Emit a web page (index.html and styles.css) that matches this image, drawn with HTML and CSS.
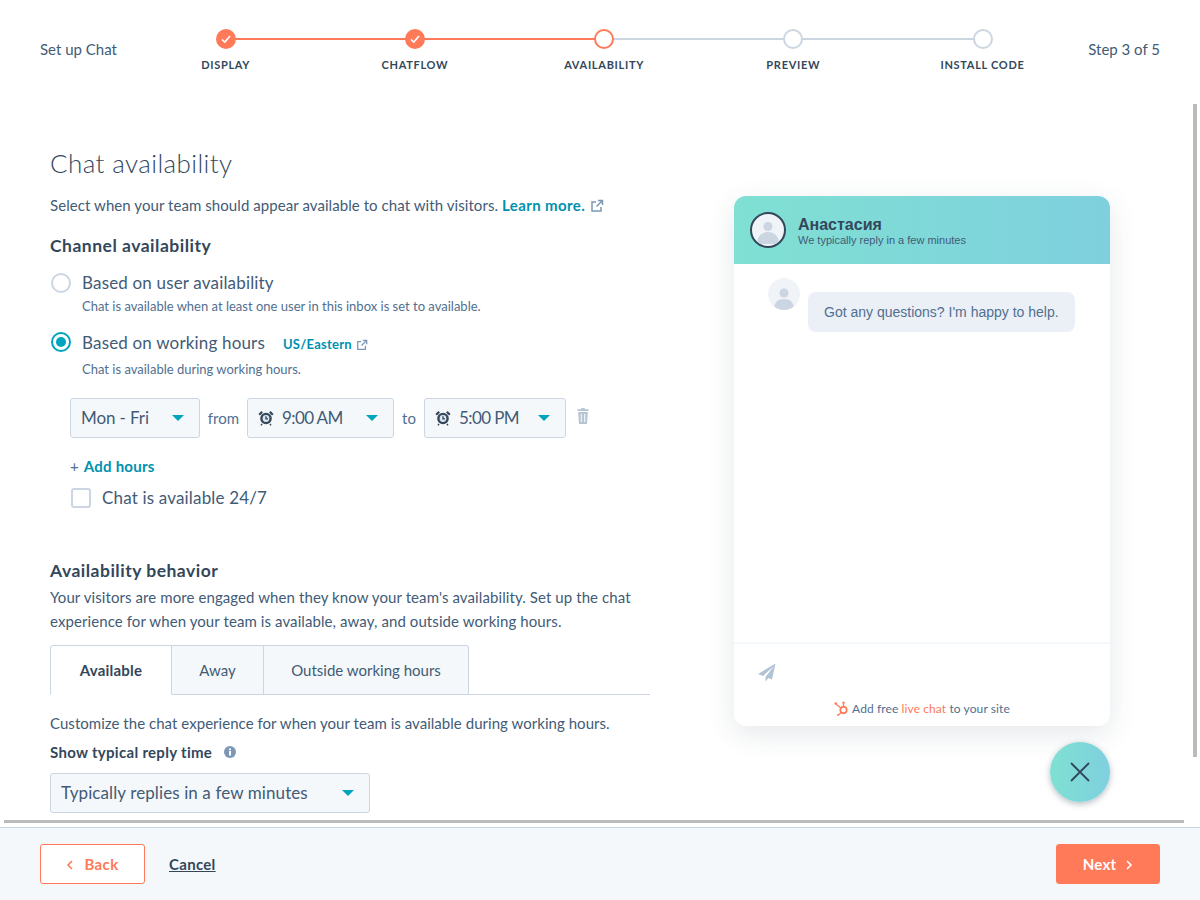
FILE: index.html
```html
<!DOCTYPE html>
<html lang="en">
<head>
<meta charset="utf-8">
<title>Set up Chat</title>
<link rel="stylesheet" href="styles.css">
</head>
<body>
<header class="top">
  <span class="top-text">Set up Chat</span>
  <ol class="stepper">
    <li class="step done"><span class="dot"><svg width="12" height="12" viewBox="0 0 12 12"><path d="M2 6.500l2.800 2.600L10 3" fill="none" stroke="#fff" stroke-width="1.600"/></svg></span><span class="step-label">DISPLAY</span></li>
    <li class="step done"><span class="dot"><svg width="12" height="12" viewBox="0 0 12 12"><path d="M2 6.500l2.800 2.600L10 3" fill="none" stroke="#fff" stroke-width="1.600"/></svg></span><span class="step-label">CHATFLOW</span></li>
    <li class="step current"><span class="dot"></span><span class="step-label">AVAILABILITY</span></li>
    <li class="step"><span class="dot"></span><span class="step-label">PREVIEW</span></li>
    <li class="step"><span class="dot"></span><span class="step-label">INSTALL CODE</span></li>
  </ol>
  <span class="top-text">Step 3 of 5</span>
</header>

<main class="content">
  <section class="form">
    <h1 class="title">Chat availability</h1>
    <p class="desc">Select when your team should appear available to chat with visitors. <a class="link">Learn more. <svg class="ext" width="14" height="14" viewBox="0 0 14 14"><path d="M11 8v4H2V3h4M8 1.500h4.500V6M12.500 1.500L6.500 7.500" fill="none" stroke="#7c98b6" stroke-width="1.500"/></svg></a></p>
    <h2 class="heading h-channel">Channel availability</h2>

    <div class="radio-row r1"><span class="radio"></span><span class="opt">Based on user availability</span></div>
    <p class="help h1">Chat is available when at least one user in this inbox is set to available.</p>
    <div class="radio-row r2"><span class="radio on"></span><span class="opt">Based on working hours</span><a class="link tz">US/Eastern <svg class="ext" width="12" height="12" viewBox="0 0 14 14"><path d="M11 8v4H2V3h4M8 1.500h4.500V6M12.500 1.500L6.500 7.500" fill="none" stroke="#7c98b6" stroke-width="1.500"/></svg></a></div>
    <p class="help h2">Chat is available during working hours.</p>

    <div class="hours">
      <div class="select s-day"><span>Mon - Fri</span><i class="caret"></i></div>
      <span class="word w-from">from</span>
      <div class="select s-time"><svg class="clock" width="16" height="16" viewBox="0 0 16 16"><circle cx="8" cy="8.500" r="5.800" fill="#33475b"/><circle cx="8" cy="8.500" r="3.400" fill="#dfe6ee"/><path d="M8 6.200v2.600h2" fill="none" stroke="#33475b" stroke-width="1.300"/><path d="M1.200 4.800L4.200 1.800 M14.800 4.800L11.800 1.800" stroke="#33475b" stroke-width="2.200"/><path d="M4 13.800l-1 1.500M12 13.800l1 1.500" stroke="#33475b" stroke-width="1.400"/></svg><span>9:00 AM</span><i class="caret"></i></div>
      <span class="word w-to">to</span>
      <div class="select s-time s-time2"><svg class="clock" width="16" height="16" viewBox="0 0 16 16"><circle cx="8" cy="8.500" r="5.800" fill="#33475b"/><circle cx="8" cy="8.500" r="3.400" fill="#dfe6ee"/><path d="M8 6.200v2.600h2" fill="none" stroke="#33475b" stroke-width="1.300"/><path d="M1.200 4.800L4.200 1.800 M14.800 4.800L11.800 1.800" stroke="#33475b" stroke-width="2.200"/><path d="M4 13.800l-1 1.500M12 13.800l1 1.500" stroke="#33475b" stroke-width="1.400"/></svg><span>5:00 PM</span><i class="caret"></i></div>
      <svg class="trash" width="12" height="16" viewBox="0 0 12 16"><path d="M4.500 0h3l.5 1.200h3.500v1.800H.5V1.200H4zM1.200 4h9.600l-.7 11a1 1 0 0 1-1 1H2.900a1 1 0 0 1-1-1z" fill="#b6c4d3"/><path d="M4.300 6v8M7.700 6v8" stroke="#fff" stroke-width="1"/></svg>
    </div>

    <div class="add"><span class="plus">+</span><a class="link">Add hours</a></div>
    <div class="check-row"><span class="check"></span><span class="opt">Chat is available 24/7</span></div>

    <h2 class="heading h-behavior">Availability behavior</h2>
    <p class="para">Your visitors are more engaged when they know your team's availability. Set up the chat experience for when your team is available, away, and outside working hours.</p>

    <div class="tabs">
      <span class="tab active">Available</span>
      <span class="tab t-away">Away</span>
      <span class="tab t-out">Outside working hours</span>
    </div>

    <p class="para custom">Customize the chat experience for when your team is available during working hours.</p>
    <div class="label-row"><span class="label">Show typical reply time</span><svg width="12" height="12" viewBox="0 0 12 12"><circle cx="6" cy="6" r="6" fill="#7c98b6"/><rect x="5" y="5" width="2" height="4.500" fill="#fff"/><circle cx="6" cy="3.300" r="1.100" fill="#fff"/></svg></div>
    <div class="select s-reply"><span>Typically replies in a few minutes</span><i class="caret"></i></div>
  </section>

  <aside class="side">
    <div class="widget">
      <div class="w-head">
        <span class="avatar big"><svg viewBox="0 0 32 32" width="32" height="32"><circle cx="16" cy="12.500" r="4.500" fill="#cbd6e2"/><path d="M5 30c0-8 5-12 11-12s11 4 11 12z" fill="#cbd6e2"/></svg></span>
        <div class="w-id"><strong class="w-name">Анастасия</strong><span class="w-sub">We typically reply in a few minutes</span></div>
      </div>
      <div class="w-body">
        <span class="avatar small"><svg viewBox="0 0 32 32" width="32" height="32"><circle cx="16" cy="15" r="4.500" fill="#cbd6e2"/><path d="M6 32c0-8 4-11 10-11s10 3 10 11z" fill="#cbd6e2"/></svg></span>
        <div class="bubble">Got any questions? I'm happy to help.</div>
      </div>
      <div class="w-input"><svg width="18" height="19" viewBox="0 0 18 19"><path d="M17.500.5L0 11l5 2L16 3 7.500 14v4.500l3-3.500 3.500 1.500z" fill="#b3c3d6"/></svg></div>
      <div class="w-brand"><svg width="15" height="15" viewBox="0 0 15 15"><circle cx="9.500" cy="9" r="3.200" fill="none" stroke="#ff7a59" stroke-width="1.700"/><path d="M9.500 6V2.500M7 7L1.800 3M7.300 11.300L4.500 14" stroke="#ff7a59" stroke-width="1.300"/><circle cx="1.800" cy="2.500" r="1.300" fill="#ff7a59"/><circle cx="9.500" cy="1.800" r="1.200" fill="#ff7a59"/><circle cx="4" cy="14" r="1" fill="#ff7a59"/></svg><span>Add free <em class="live">live chat</em> to your site</span></div>
    </div>
    <div class="fab"><svg width="20" height="20" viewBox="0 0 20 20"><path d="M1 1l18 18M19 1L1 19" stroke="#33475b" stroke-width="1.800"/></svg></div>
  </aside>
</main>

<div class="hbar"></div>
<div class="vbar"></div>

<footer class="bottom">
  <button class="btn back"><svg width="8" height="12" viewBox="0 0 8 12"><path d="M6 2L2 6l4 4" fill="none" stroke="#ff7a59" stroke-width="1.600"/></svg>Back</button>
  <a class="cancel">Cancel</a>
  <button class="btn next">Next<svg width="8" height="12" viewBox="0 0 8 12"><path d="M2 2l4 4-4 4" fill="none" stroke="#fff" stroke-width="1.600"/></svg></button>
</footer>
</body>
</html>
```

FILE: styles.css
```css
* { box-sizing: border-box; }
html, body { margin: 0; height: 100%; }
body {
  height: 900px;
  overflow: hidden;
  display: flex;
  flex-direction: column;
  position: relative;
  font-family: "Lato", "Open Sans", sans-serif;
  font-size: 15px;
  color: #33475b;
  background: #fff;
}
p, h1, h2, ol { margin: 0; padding: 0; }

/* top */
.top {
  height: 100px;
  flex: none;
  padding: 0 40px;
  display: flex;
  justify-content: space-between;
  align-items: flex-start;
}
.top-text { font-size: 15px; line-height: 20px; margin-top: 39px; color: #425b76; }
.stepper { display: flex; width: 946px; list-style: none; padding-top: 29px; margin-left: 3px; }
.step {
  flex: 1;
  position: relative;
  display: flex;
  flex-direction: column;
  align-items: center;
}
.step::before {
  content: "";
  position: absolute;
  left: 50%;
  width: 100%;
  top: 9px;
  height: 2px;
  background: #cbd6e2;
}
.step:last-child::before { display: none; }
.step.done::before { background: #ff7a59; }
.dot {
  position: relative;
  width: 20px;
  height: 20px;
  border-radius: 50%;
  border: 2px solid #cbd6e2;
  background: #fff;
  display: flex;
  align-items: center;
  justify-content: center;
}
.done .dot { background: #ff7a59; border-color: #ff7a59; }
.current .dot { border-color: #ff7a59; }
.step-label {
  margin-top: 9px;
  font-size: 11px;
  line-height: 14px;
  font-weight: 700;
  letter-spacing: .7px;
}

/* layout */
.content { flex: 1; min-height: 0; display: flex; padding: 47px 0 0 50px; overflow: hidden; }
.form { width: 600px; flex: none; }
.side { width: 376px; margin-left: 84px; padding-top: 49px; display: flex; flex-direction: column; flex: none; }

.title { font-size: 26px; line-height: 32px; font-weight: 300; letter-spacing: .4px; }
.desc { margin-top: 14px; font-size: 15px; line-height: 24px; letter-spacing: .07px; color: #425b76; }
.link { color: #0091ae; font-weight: 700; letter-spacing: .4px; }
.ext { vertical-align: -2px; margin-left: 1px; }
.heading { font-size: 17.500px; line-height: 24px; font-weight: 700; letter-spacing: .5px; }
.h-channel { margin-top: 17px; }
.radio-row { display: flex; align-items: center; height: 24px; }
.r1 { margin-top: 13px; }
.r2 { margin-top: 14px; }
.r2 .opt { margin-top: 2px; }
.radio {
  width: 20px; height: 20px; flex: none;
  border-radius: 50%;
  border: 2px solid #cbd6e2;
  background: #fff;
  margin: 0 11px 0 1px;
  position: relative;
}
.radio.on { border-color: #00a4bd; }
.radio.on::after {
  content: "";
  position: absolute;
  inset: 3px;
  border-radius: 50%;
  background: #00a4bd;
}
.opt { font-size: 17px; line-height: 22px; letter-spacing: .17px; color: #425b76; }
.tz { font-size: 13px; line-height: 18px; margin: 4px 0 0 18px; letter-spacing: .25px; }
.help { font-size: 13px; line-height: 20px; padding-left: 32px; color: #516f90; }
.h1 { margin-top: 1px; }
.h2 { margin-top: 5px; }

.hours { display: flex; align-items: center; margin-top: 19px; margin-left: 20px; height: 40px; }
.select {
  height: 40px;
  display: flex;
  align-items: center;
  background: #f5f8fa;
  border: 1px solid #cbd6e2;
  border-radius: 3px;
  padding: 0 10px 1px;
  font-size: 17px;
  color: #425b76;
  position: relative;
  flex: none;
}
.caret {
  position: absolute;
  right: 15px;
  top: 16px;
  border: 6px solid transparent;
  border-bottom: 0;
  border-top: 6px solid #00a4bd;
  border-left-width: 6.500px;
  border-right-width: 6.500px;
}
.s-day { width: 130px; letter-spacing: -.1px; }
.s-time { width: 147px; letter-spacing: -.6px; }
.s-time2 { width: 142px; }
.s-reply { width: 320px; margin-top: 9px; letter-spacing: .1px; }
.clock { margin-right: 8px; margin-top: 1px; flex: none; }
.word { font-size: 15px; line-height: 20px; margin-top: -1px; color: #516f90; text-align: center; }
.w-from { width: 47px; }
.w-to { width: 30px; }
.trash { margin-left: 11px; margin-top: -4px; }

.add { margin-top: 18px; margin-left: 20px; font-size: 15px; line-height: 20px; }
.add .link { letter-spacing: .25px; }
.plus { color: #516f90; margin-right: 5px; }
.check-row { display: flex; align-items: center; height: 24px; margin-top: 10px; margin-left: 21px; }
.check {
  width: 20px; height: 20px;
  border: 2px solid #cbd6e2;
  border-radius: 3px;
  background: #fff;
  margin-right: 11px;
}
.h-behavior { margin-top: 49px; }
.para { font-size: 15px; line-height: 24px; letter-spacing: .09px; margin-top: 2px; color: #425b76; }

.tabs {
  margin-top: 12px;
  height: 50px;
  display: flex;
  border-bottom: 1px solid #cbd6e2;
}
.tab {
  height: 50px;
  display: flex;
  align-items: center;
  justify-content: center;
  font-size: 15px;
  color: #425b76;
  background: #f5f8fa;
  border: 1px solid #cbd6e2;
  border-left: 0;
  margin-bottom: -1px;
}
.tab.active {
  width: 122px;
  background: #fff;
  font-weight: 700;
  color: #33475b;
  letter-spacing: .2px;
  border-left: 1px solid #cbd6e2;
  border-bottom-color: #fff;
  border-radius: 3px 0 0 0;
}
.t-away { width: 92px; }
.t-out { width: 205px; border-radius: 0 3px 0 0; }

.para.custom { margin-top: 16px; letter-spacing: .04px; }
.label-row { display: flex; align-items: center; gap: 12px; margin-top: 5px; height: 24px; }
.label { font-size: 15px; font-weight: 700; letter-spacing: .3px; }

/* widget */
.widget {
  height: 530px;
  border-radius: 12px;
  background: #fff;
  box-shadow: 0 8px 28px rgba(45, 62, 80, .12);
  display: flex;
  flex-direction: column;
  font-family: "Liberation Sans", Arial, sans-serif;
  overflow: hidden;
}
.w-head {
  height: 68px;
  flex: none;
  background: linear-gradient(90deg, #80e0d3, #7ed0de);
  display: flex;
  align-items: center;
  padding-left: 16px;
}
.avatar {
  display: block;
  border-radius: 50%;
  background: #f0f3f8;
  overflow: hidden;
  flex: none;
}
.avatar.big { width: 36px; height: 36px; border: 2px solid #33475b; }
.avatar.small { width: 32px; height: 32px; }
.w-id { margin-left: 12px; padding-top: 2px; display: flex; flex-direction: column; }
.w-name { font-size: 16px; line-height: 18px; }
.w-sub { font-size: 11px; line-height: 14px; margin-top: -1px; color: #425b76; }
.w-body { flex: 1; display: flex; padding: 14px 0 0 34px; align-items: flex-start; border-bottom: 2px solid #f5f8fa; }
.bubble {
  margin: 14px 0 0 8px;
  height: 40px;
  width: 267px;
  padding: 0 16px;
  display: flex;
  align-items: center;
  white-space: nowrap;
  background: #eaf0f6;
  border-radius: 8px;
  font-size: 14px;
  color: #516f90;
}
.w-input { height: 50px; flex: none; padding: 19px 0 0 24px; }
.w-brand {
  height: 32px;
  flex: none;
  display: flex;
  justify-content: center;
  align-items: center;
  gap: 3px;
  font-family: "Lato", sans-serif;
  font-size: 12px;
  letter-spacing: .1px;
  color: #516f90;
  padding-bottom: 3px;
}
.live { font-style: normal; color: #ff7a59; }
.fab {
  margin-top: 16px;
  align-self: flex-end;
  width: 60px; height: 60px;
  border-radius: 50%;
  background: linear-gradient(90deg, #80e0d3, #7ed0de);
  box-shadow: 0 2px 6px rgba(45, 62, 80, .35);
  display: flex;
  align-items: center;
  justify-content: center;
}

/* scrollbars */
.hbar { position: absolute; left: 4px; top: 820px; width: 1180px; height: 3px; background: #bbb; }
.vbar { position: absolute; left: 1193px; top: 104px; width: 4px; height: 653px; background: #bbb; }

/* footer */
.bottom {
  height: 73px;
  flex: none;
  background: #f5f8fa;
  border-top: 1px solid #cbd6e2;
  padding: 0 40px;
  display: flex;
  align-items: center;
}
.btn {
  height: 40px;
  border-radius: 3px;
  display: flex;
  align-items: center;
  justify-content: center;
  font-family: inherit;
  font-size: 15px;
  line-height: 18px;
  padding-bottom: 2px;
  font-weight: 700;
  letter-spacing: .2px;
}
.btn svg { margin-top: 2px; }
.back { width: 105px; background: #fff; border: 1px solid #ff7a59; color: #ff7a59; gap: 10px; letter-spacing: .4px; }
.next { width: 104px; background: #ff7a59; border: 1px solid #ff7a59; color: #fff; gap: 9px; margin-left: auto; }
.cancel { margin-left: 24px; font-size: 15px; line-height: 18px; font-weight: 700; text-decoration: underline; letter-spacing: .3px; }
```
